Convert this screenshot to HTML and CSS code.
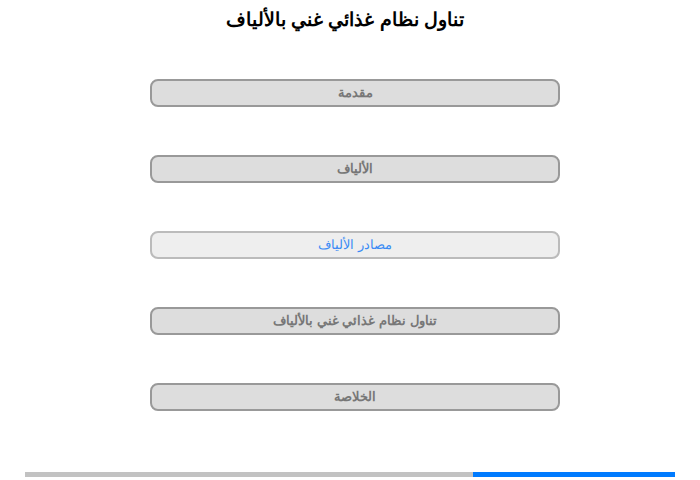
FILE: index.html
```html
<!DOCTYPE html>
<html lang="ar" dir="rtl">
<head>
<meta charset="utf-8">
<link rel="stylesheet" href="styles.css">
</head>
<body>
<h1 class="title">تناول نظام غذائي غني بالألياف</h1>
<nav class="menu">
  <div class="item">مقدمة</div>
  <div class="item">الألياف</div>
  <div class="item active">مصادر الألياف</div>
  <div class="item">تناول نظام غذائي غني بالألياف</div>
  <div class="item">الخلاصة</div>
</nav>
<div class="progress"><div class="fill" style="width:31.1%"></div></div>
</body>
</html>
```
FILE: styles.css
```css
html, body {
  margin: 0;
  padding: 0;
  background: #fff;
  font-family: "Liberation Sans", Arial, sans-serif;
}
body {
  width: 700px;
  height: 480px;
  overflow: hidden;
}
.title {
  margin: 0;
  padding-top: 9px;
  height: 70px;
  box-sizing: border-box;
  font-size: 18.5px;
  font-weight: bold;
  text-align: center;
  color: #000;
  padding-right: 10px;
}
.menu {
  display: flex;
  flex-direction: column;
  gap: 48px;
  width: 410px;
  margin-top: 9px;
  margin-right: 140px;
}
.item {
  box-sizing: border-box;
  height: 28px;
  border: 2px solid #999;
  border-radius: 8px;
  background: #ddd;
  color: #777;
  font-size: 13px;
  font-weight: bold;
  text-align: center;
  line-height: 24px;
}
.item.active {
  background: #eee;
  border-color: #bbb;
  color: #3b8cf5;
  font-weight: normal;
}
.progress {
  margin: 61px 25px 0 25px;
  height: 5px;
  background: #c2c2c2;
  display: flex;
  direction: rtl;
}
.fill {
  height: 100%;
  background: #007bff;
}
```
